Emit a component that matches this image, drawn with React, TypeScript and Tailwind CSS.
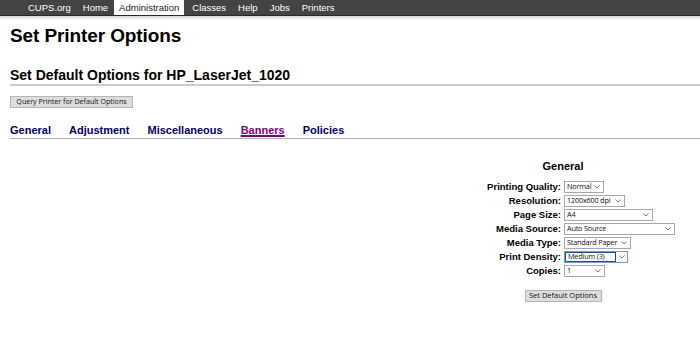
import React from "react";

const Chevron = () => (
  <svg width="6" height="4" viewBox="0 0 6 4" className="shrink-0">
    <path d="M0.5 0.5 L3 3 L5.5 0.5" fill="none" stroke="#6b6b6b" strokeWidth="0.9" />
  </svg>
);

function FakeSelect({ value, width, focused }: { value: string; width: number; focused?: boolean }) {
  if (focused) {
    return (
      <div
        className="flex h-[12px] items-stretch border border-[#7a9cc0] bg-white"
        style={{ width }}
      >
        <div className="flex flex-1 items-center border border-[#1f4e86] pl-[2px] text-[7.3px] leading-none tracking-[-0.2px] text-[#111]">
          {value}
        </div>
        <div className="flex w-[11px] items-center justify-center">
          <Chevron />
        </div>
      </div>
    );
  }
  return (
    <div
      className="flex h-[12px] items-center justify-between border border-[#a8a8a8] bg-white pl-[2px] pr-[3px] text-[7.3px] leading-none tracking-[-0.2px] text-[#111]"
      style={{ width }}
    >
      <span className="whitespace-nowrap">{value}</span>
      <Chevron />
    </div>
  );
}

const rows: { label: string; value: string; width: number; focused?: boolean }[] = [
  { label: "Printing Quality:", value: "Normal", width: 40 },
  { label: "Resolution:", value: "1200x600 dpi", width: 61 },
  { label: "Page Size:", value: "A4", width: 89 },
  { label: "Media Source:", value: "Auto Source", width: 111 },
  { label: "Media Type:", value: "Standard Paper", width: 67 },
  { label: "Print Density:", value: "Medium (3)", width: 64, focused: true },
  { label: "Copies:", value: "1", width: 41 },
];

export default function App() {
  const nav = ["CUPS.org", "Home", "Administration", "Classes", "Help", "Jobs", "Printers"];
  return (
    <div className="h-[337px] w-[700px] overflow-hidden bg-white font-['Liberation_Sans',Arial,sans-serif] text-black">
      {/* Header */}
      <div className="flex h-[15px] items-stretch bg-[#444444] pl-[22px] text-[9.5px] leading-none">
        {nav.map((n) => (
          <div
            key={n}
            className={
              n === "Administration"
                ? "flex items-center bg-white px-[5px] text-[#222] mr-[2px]"
                : "flex items-center px-[6px] text-white"
            }
          >
            {n}
          </div>
        ))}
      </div>
      <div className="h-[1px] bg-[#2a2a2a]" />
      <div className="h-[4px] bg-gradient-to-b from-[#d6d6d6] to-white" />

      <div className="pl-[10px]">
        <h1 className="mt-[5px] text-[19px] font-bold leading-[22px] tracking-[-0.1px]">Set Printer Options</h1>

        <h2 className="mt-[20px] border-b-2 border-[#cccccc] pb-[1px] text-[14px] font-bold leading-[16px]">
          Set Default Options for HP_LaserJet_1020
        </h2>

        <div className="mt-[10px]">
          <button className="flex h-[12px] w-[123px] items-center justify-center border border-[#b5b5b5] bg-[#dddddd] font-['Open_Sans',sans-serif] text-[7.1px] leading-none text-[#111]">
            Query Printer for Default Options
          </button>
        </div>

        <div className="mt-[16px] flex gap-[18px] border-b border-[#b0b0b0] pb-[1px] text-[11px] font-bold leading-[13px] text-[#000066]">
          <span>General</span>
          <span>Adjustment</span>
          <span>Miscellaneous</span>
          <span className="text-[#800080] underline decoration-[1.5px] underline-offset-[1px]">Banners</span>
          <span>Policies</span>
        </div>
      </div>

      <div className="flex justify-end pr-[25px]">
        <div className="w-[224px]">
          <div className="mt-[21px] text-center text-[11px] font-bold leading-[13px]">General</div>
          <div className="mt-[7px] grid grid-cols-[112px_112px]">
            {rows.map((r) => (
              <React.Fragment key={r.label}>
                <div className="flex h-[14px] items-center justify-end pr-[2px] text-[9.5px] font-bold leading-none whitespace-nowrap">
                  {r.label}
                </div>
                <div className="flex h-[14px] items-center pl-[1px] font-['Open_Sans',sans-serif]">
                  <FakeSelect value={r.value} width={r.width} focused={r.focused} />
                </div>
              </React.Fragment>
            ))}
          </div>
          <div className="mt-[12px] flex justify-center">
            <button className="flex h-[12px] w-[77px] items-center justify-center border border-[#b5b5b5] bg-[#dddddd] font-['Open_Sans',sans-serif] text-[7.5px] leading-none text-[#111]">
              Set Default Options
            </button>
          </div>
        </div>
      </div>
    </div>
  );
}
